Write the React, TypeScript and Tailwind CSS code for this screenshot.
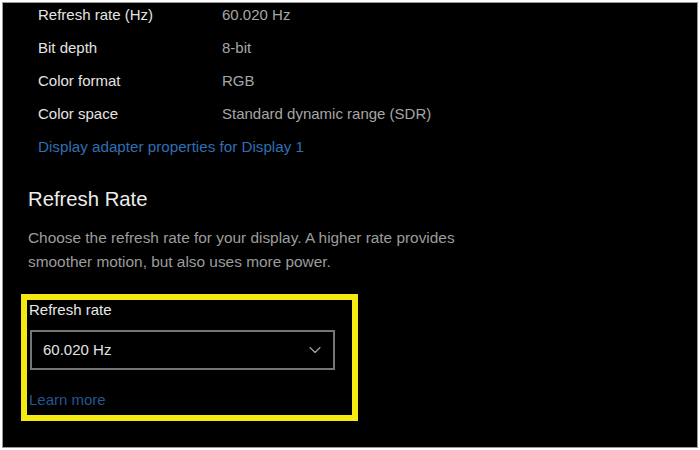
import { ChevronDown } from 'lucide-react';

const rows = [
  { label: 'Refresh rate (Hz)', value: '60.020 Hz' },
  { label: 'Bit depth', value: '8-bit' },
  { label: 'Color format', value: 'RGB' },
  { label: 'Color space', value: 'Standard dynamic range (SDR)' },
];

export default function App() {
  return (
    <div className="w-[700px] h-[450px] bg-white p-[2px] font-['Liberation_Sans',Arial,sans-serif]">
      <div className="h-[446px] w-[696px] bg-black border border-[#9a9a9a] overflow-hidden">
        {/* Display info rows */}
        <div className="-mt-[4px] pl-[35px] flex flex-col">
          {rows.map((r) => (
            <div key={r.label} className="h-[33px] flex items-center text-[15px]">
              <span className="w-[184px] text-[#e4e4e4]">{r.label}</span>
              <span className="text-[#a6a6a6]">{r.value}</span>
            </div>
          ))}
          <div className="h-[33px] flex items-center text-[15.2px] text-[#2f6fb3]">
            Display adapter properties for Display 1
          </div>
        </div>

        {/* Refresh rate section */}
        <h2 className="mt-[20px] pl-[25px] text-[20.3px] leading-[30px] text-[#ececec]">Refresh Rate</h2>
        <p className="mt-[12px] pl-[25px] w-[480px] text-[15.4px] leading-[24px] text-[#9c9c9c]">
          Choose the refresh rate for your display. A higher rate provides smoother motion, but also uses more power.
        </p>

        <div className="mt-[20px] ml-[18px] w-[337px] h-[127px] border-[6px] border-[#f4ea12] pl-[2px]">
          <div className="text-[15px] leading-[20px] text-[#e8e8e8]">Refresh rate</div>
          <div className="mt-[10px] ml-[1px] w-[305px] h-[40px] border-2 border-[#767676] flex items-center justify-between pl-[11px] pr-[8px]">
            <span className="text-[15px] text-[#e2e2e2]">60.020 Hz</span>
            <ChevronDown size={20} strokeWidth={1.3} className="text-[#a8a8a8]" />
          </div>
          <div className="mt-[20px] text-[15px] leading-[20px] text-[#25568f]">Learn more</div>
        </div>
      </div>
    </div>
  );
}
